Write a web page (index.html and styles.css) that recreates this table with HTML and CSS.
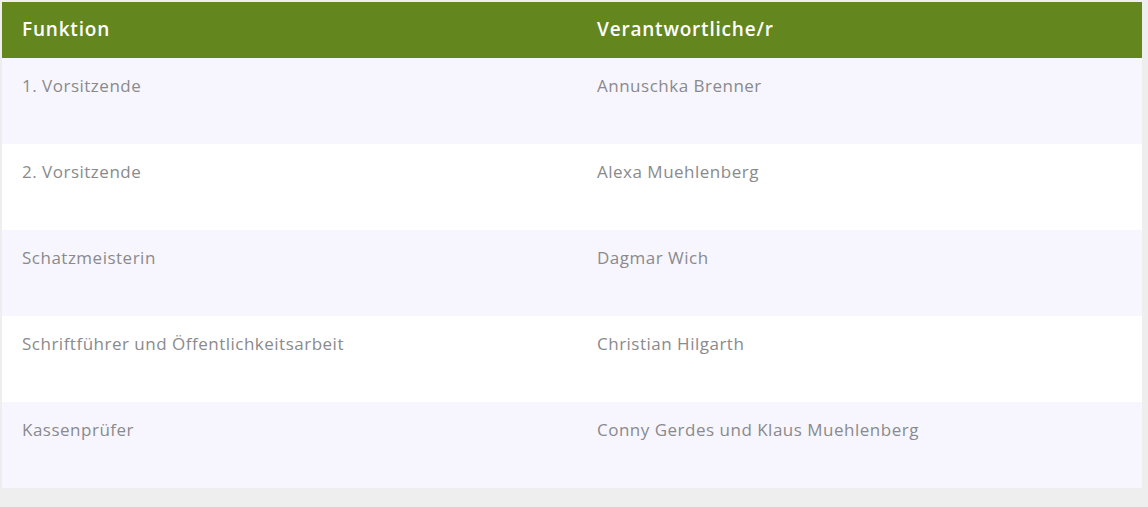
FILE: index.html
```html
<!DOCTYPE html>
<html lang="de">
<head>
<meta charset="utf-8">
<title>Vorstand</title>
<link rel="stylesheet" href="styles.css">
</head>
<body>
<div class="page">
  <table class="board">
    <thead>
      <tr><th class="col-fn">Funktion</th><th>Verantwortliche/r</th></tr>
    </thead>
    <tbody>
      <tr class="odd"><td>1. Vorsitzende</td><td>Annuschka Brenner</td></tr>
      <tr class="even"><td>2. Vorsitzende</td><td>Alexa Muehlenberg</td></tr>
      <tr class="odd"><td>Schatzmeisterin</td><td>Dagmar Wich</td></tr>
      <tr class="even"><td>Schriftführer und Öffentlichkeitsarbeit</td><td>Christian Hilgarth</td></tr>
      <tr class="odd"><td>Kassenprüfer</td><td>Conny Gerdes und Klaus Muehlenberg</td></tr>
    </tbody>
  </table>
</div>
</body>
</html>
```

FILE: styles.css
```css
html, body {
  margin: 0;
  padding: 0;
  background: #eeeeee;
}
.page {
  padding: 2px 6px 19px 2px;
}
.board {
  width: 1140px;
  border-collapse: collapse;
  table-layout: fixed;
  font-family: "Open Sans", "Liberation Sans", sans-serif;
}
.board th {
  height: 56px;
  padding: 0 20px 3px 20px;
  background: #64861f;
  color: #ffffff;
  font-size: 19px;
  letter-spacing: 0.8px;
  font-weight: 600;
  text-align: left;
  vertical-align: middle;
  box-sizing: border-box;
}
.board .col-fn {
  width: 575px;
}
.board td {
  height: 86px;
  padding: 16px 20px 0 20px;
  font-size: 17px;
  letter-spacing: 0.5px;
  color: #8a8a8c;
  vertical-align: top;
  box-sizing: border-box;
}
.board tr.odd td {
  background: #f7f6fe;
}
.board tr.even td {
  background: #ffffff;
}
```
